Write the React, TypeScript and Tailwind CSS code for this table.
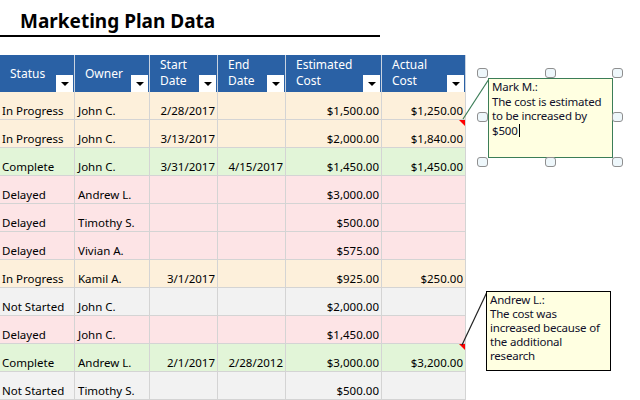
import React from "react";

type Row = {
  status: "In Progress" | "Complete" | "Delayed" | "Not Started";
  owner: string;
  start: string;
  end: string;
  est: string;
  actual: string;
  note?: boolean;
};

const ROWS: Row[] = [
  { status: "In Progress", owner: "John C.", start: "2/28/2017", end: "", est: "$1,500.00", actual: "$1,250.00" },
  { status: "In Progress", owner: "John C.", start: "3/13/2017", end: "", est: "$2,000.00", actual: "$1,840.00", note: true },
  { status: "Complete", owner: "John C.", start: "3/31/2017", end: "4/15/2017", est: "$1,450.00", actual: "$1,450.00" },
  { status: "Delayed", owner: "Andrew L.", start: "", end: "", est: "$3,000.00", actual: "" },
  { status: "Delayed", owner: "Timothy S.", start: "", end: "", est: "$500.00", actual: "" },
  { status: "Delayed", owner: "Vivian A.", start: "", end: "", est: "$575.00", actual: "" },
  { status: "In Progress", owner: "Kamil A.", start: "3/1/2017", end: "", est: "$925.00", actual: "$250.00" },
  { status: "Not Started", owner: "John C.", start: "", end: "", est: "$2,000.00", actual: "" },
  { status: "Delayed", owner: "John C.", start: "", end: "", est: "$1,450.00", actual: "" },
  { status: "Complete", owner: "Andrew L.", start: "2/1/2017", end: "2/28/2012", est: "$3,000.00", actual: "$3,200.00", note: true },
  { status: "Not Started", owner: "Timothy S.", start: "", end: "", est: "$500.00", actual: "" },
];

const ROW_BG: Record<Row["status"], string> = {
  "In Progress": "bg-[#fdf0db]",
  Complete: "bg-[#e2f5d8]",
  Delayed: "bg-[#fde4e6]",
  "Not Started": "bg-[#f2f2f2]",
};

const HEADERS = [
  { label: ["Status"], w: "w-[75px]" },
  { label: ["Owner"], w: "w-[75px]" },
  { label: ["Start", "Date"], w: "w-[68px]" },
  { label: ["End", "Date"], w: "w-[68px]" },
  { label: ["Estimated", "Cost"], w: "w-[96px]" },
  { label: ["Actual", "Cost"], w: "w-[84px]" },
];

function FilterBox() {
  return (
    <span className="absolute bottom-0 right-[1px] flex h-[17px] w-[17px] items-center justify-center bg-white">
      <span className="h-0 w-0 border-x-[4px] border-t-[4px] border-x-transparent border-t-black" />
    </span>
  );
}

function Handle({ cls }: { cls: string }) {
  return <span className={`absolute h-[10px] w-[11px] rounded-[3px] border border-[#8f8f8f] bg-[#eef7fb] ${cls}`} />;
}

export default function App() {
  const cell = "flex h-full items-end border-r border-[#d4d4d4] pb-[1px] whitespace-nowrap";
  return (
    <div className="relative h-[400px] w-[640px] overflow-hidden bg-white font-['Noto_Sans','Open_Sans',sans-serif] text-[11.5px] text-black">
      <div className="w-[380px] border-b-2 border-black pl-[20px] pt-[9px] pb-[1px]">
        <h1 className="text-[19px] font-bold leading-[25px]">Marketing Plan Data</h1>
      </div>

      <div className="mt-[18px] w-[466px]">
        <div className="flex h-[37px] bg-[#2a61a5] text-[12px] text-white">
          {HEADERS.map((h) => (
            <div key={h.label.join(" ")} className={`relative h-full ${h.w} border-r border-[#c9d3e0] pl-[10px]`}>
              <div className={`flex h-full flex-col justify-center leading-[16px] ${h.label.length > 1 ? "pb-[2px]" : "pb-0"}`}>
                {h.label.map((l) => (
                  <span key={l}>{l}</span>
                ))}
              </div>
              <FilterBox />
            </div>
          ))}
        </div>

        {ROWS.map((r, i) => (
          <div key={i} className={`flex h-[28px] border-b border-[#d4d4d4] leading-[14px] ${ROW_BG[r.status]}`}>
            <div className={`${cell} w-[75px] pl-[2px]`}>{r.status}</div>
            <div className={`${cell} w-[75px] pl-[3px]`}>{r.owner}</div>
            <div className={`${cell} w-[68px] justify-end pr-[2px]`}>{r.start}</div>
            <div className={`${cell} w-[68px] justify-end pr-[2px]`}>{r.end}</div>
            <div className={`${cell} w-[96px] justify-end pr-[2px]`}>{r.est}</div>
            <div className={`${cell} relative w-[84px] justify-end pr-[2px]`}>
              {r.actual}
              {r.note && (
                <span className="absolute right-0 top-0 h-0 w-0 border-l-[6px] border-t-[6px] border-l-transparent border-t-[#ff0000]" />
              )}
            </div>
          </div>
        ))}
      </div>

      <svg className="pointer-events-none absolute left-0 top-0" width="640" height="400">
        <line x1="463" y1="119" x2="489" y2="79" stroke="#3b7d57" strokeWidth="1.2" />
        <line x1="462" y1="345" x2="487" y2="292" stroke="#222" strokeWidth="1.2" />
      </svg>

      <div className="absolute left-[482px] top-[73px] h-[89px] w-[136px]">
        <div className="absolute left-[6px] top-[5px] h-[80px] w-[125px] whitespace-nowrap border border-[#3b7d57] bg-[#ffffe1] px-[3px] pt-[1px] text-[11.5px] leading-[14.5px] tracking-[-0.2px] text-[#10102a]">
          <div>Mark M.:</div>
          <div>The cost is estimated</div>
          <div>to be increased by</div>
          <div className="flex items-center">
            $500<span className="ml-[1px] inline-block h-[13px] w-[1px] bg-black" />
          </div>
        </div>
        <Handle cls="left-[-5px] top-[-5px]" />
        <Handle cls="left-[63px] top-[-5px]" />
        <Handle cls="right-[-5px] top-[-5px]" />
        <Handle cls="left-[-5px] top-[39px]" />
        <Handle cls="right-[-5px] top-[39px]" />
        <Handle cls="left-[-5px] bottom-[-5px]" />
        <Handle cls="left-[63px] bottom-[-5px]" />
        <Handle cls="right-[-5px] bottom-[-5px]" />
      </div>

      <div className="absolute left-[486px] top-[291px] h-[80px] w-[125px] whitespace-nowrap border border-black bg-[#ffffe1] px-[3px] pt-[1px] text-[11.5px] leading-[14px] tracking-[-0.2px] text-[#10102a]">
        <div>Andrew L.:</div>
        <div>The cost was</div>
        <div>increased because of</div>
        <div>the additional</div>
        <div>research</div>
      </div>
    </div>
  );
}
